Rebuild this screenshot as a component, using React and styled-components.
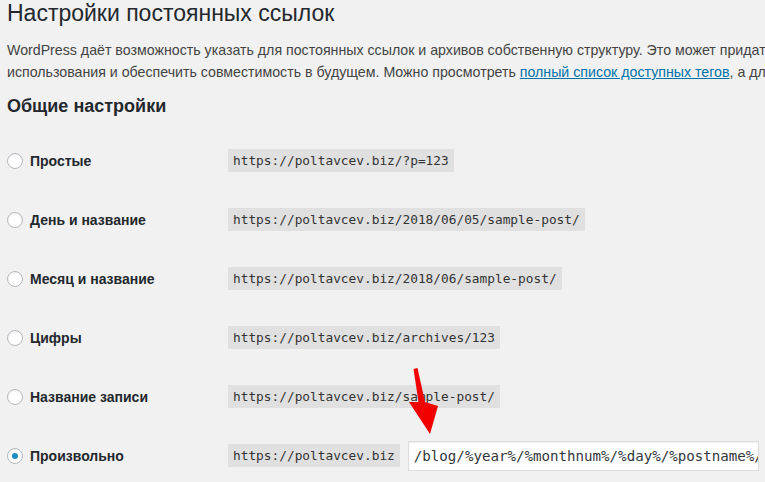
import React from "react";
import styled, { createGlobalStyle } from "styled-components";

const Global = createGlobalStyle`
  html, body {
    margin: 0;
    padding: 0;
    background: #f1f1f1;
    overflow: hidden;
  }
  body {
    font-family: "Liberation Sans", Arial, sans-serif;
    color: #23282d;
  }
`;

const Page = styled.div`
  position: relative;
  width: 1200px;
  padding: 0 0 0 7px;
`;

const Title = styled.h1`
  margin: 0;
  font-size: 23px;
  font-weight: 400;
  line-height: 27px;
`;

const Intro = styled.p`
  margin: 12px 0 0;
  font-size: 14.2px;
  line-height: 22px;
  white-space: nowrap;
  color: #444;
`;

const Link = styled.a`
  color: #0073aa;
  text-decoration: underline;
`;

const Heading = styled.h2`
  margin: 11px 0 0;
  font-size: 18px;
  font-weight: 600;
  line-height: 24px;
`;

const Options = styled.div`
  display: flex;
  flex-direction: column;
  margin-top: 13px;
`;

const Row = styled.label`
  display: flex;
  align-items: center;
  height: 59px;
`;

const Choice = styled.div`
  display: flex;
  align-items: center;
  width: 221px;
  font-size: 14px;
  font-weight: 700;
  color: #23282d;
`;

const Radio = styled.span`
  display: inline-flex;
  align-items: center;
  justify-content: center;
  box-sizing: border-box;
  width: 16px;
  height: 16px;
  margin-right: 7px;
  border-radius: 50%;
  background: #fff;
  border: 1px solid #b4b9be;
  box-shadow: inset 0 1px 2px rgba(0, 0, 0, 0.07);

  &::before {
    content: "";
    display: ${(p) => (p.checked ? "block" : "none")};
    width: 6px;
    height: 6px;
    border-radius: 50%;
    background: #1e8cbe;
  }
`;

const Code = styled.code`
  display: inline-block;
  padding: 3px 5px 2px;
  background: rgba(0, 0, 0, 0.07);
  font-family: "DejaVu Sans Mono", "Liberation Mono", monospace;
  font-size: 12.8px;
  line-height: 18px;
  color: #333;
`;

const Structure = styled.div`
  box-sizing: border-box;
  width: 351px;
  height: 30px;
  margin-left: 8px;
  padding: 0 0 0 5px;
  overflow: hidden;
  white-space: nowrap;
  background: #fff;
  border: 1px solid #ddd;
  box-shadow: inset 0 1px 2px rgba(0, 0, 0, 0.07);
  font-family: "DejaVu Sans Mono", "Liberation Mono", monospace;
  font-size: 14.15px;
  line-height: 28px;
  color: #32373c;
`;

const Arrow = styled.svg`
  position: absolute;
  left: 400px;
  top: 362px;
  pointer-events: none;
`;

const options = [
  { label: "Простые", url: "https://poltavcev.biz/?p=123" },
  { label: "День и название", url: "https://poltavcev.biz/2018/06/05/sample-post/" },
  { label: "Месяц и название", url: "https://poltavcev.biz/2018/06/sample-post/" },
  { label: "Цифры", url: "https://poltavcev.biz/archives/123" },
  { label: "Название записи", url: "https://poltavcev.biz/sample-post/" },
];

export default function App() {
  return (
    <Page>
      <Global />
      <Title>Настройки постоянных ссылок</Title>
      <Intro>
        WordPress даёт возможность указать для постоянных ссылок и архивов собственную структуру. Это может придать вашим ссылкам красоту, удобство
        <br />
        использования и обеспечить совместимость в будущем. Можно просмотреть{" "}
        <Link href="#">полный список доступных тегов</Link>, а для начала — вот несколько примеров.
      </Intro>
      <Heading>Общие настройки</Heading>
      <Options>
        {options.map((o) => (
          <Row key={o.label}>
            <Choice>
              <Radio />
              {o.label}
            </Choice>
            <Code>{o.url}</Code>
          </Row>
        ))}
        <Row>
          <Choice>
            <Radio checked />
            Произвольно
          </Choice>
          <Code>https://poltavcev.biz</Code>
          <Structure>/blog/%year%/%monthnum%/%day%/%postname%/</Structure>
        </Row>
      </Options>
      <Arrow width="50" height="80" viewBox="0 0 50 80">
        <path
          d="M13.5 7 L17.5 6 L25 40 L38 44 L30 72 L9 40 L18.5 40 Z"
          fill="#f20000"
        />
      </Arrow>
    </Page>
  );
}
